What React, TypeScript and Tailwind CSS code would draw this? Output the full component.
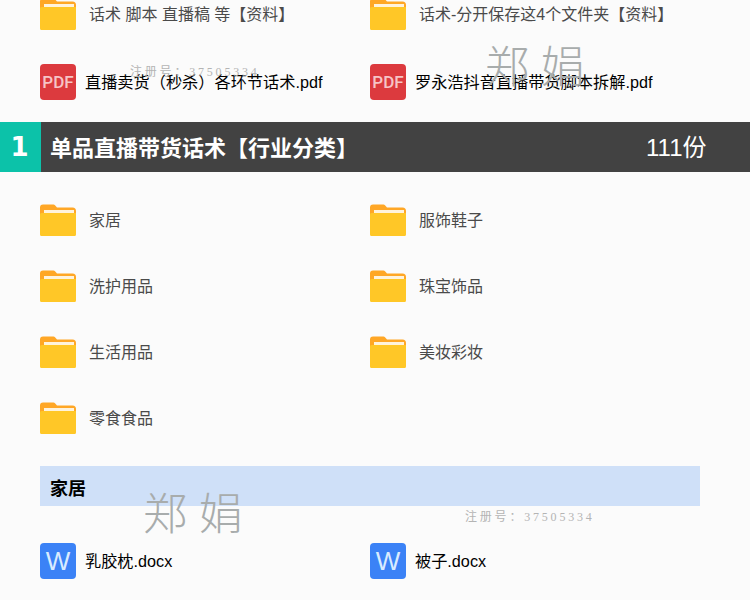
const cjk = "font-['Liberation_Sans','Noto_Sans_CJK_SC',sans-serif]";

function FolderIcon() {
  return (
    <svg width="36" height="36" viewBox="0 0 36 36" className="shrink-0">
      <path d="M3 2.500h10.500a2 2 0 0 1 1.500.7L17 5.500h15.500A3.500 3.500 0 0 1 36 9V13H0V5.500A3 3 0 0 1 3 2.500z" fill="#ffa726" />
      <rect x="4" y="8" width="30" height="3.500" fill="#fff3dc" />
      <path d="M1.500 11H36V32.500A1.500 1.500 0 0 1 34.500 34H1.500A1.500 1.500 0 0 1 0 32.500V12.500A1.500 1.500 0 0 1 1.500 11z" fill="#ffc727" />
    </svg>
  );
}

function FolderRow({ label }: { label: string }) {
  return (
    <div className="flex items-center gap-[13px]">
      <FolderIcon />
      <span className="pt-0.5 text-base text-[#4a4a4a]">{label}</span>
    </div>
  );
}

function FileRow({ label, kind }: { label: string; kind: "pdf" | "word" }) {
  return (
    <div className="flex items-center gap-[9px]">
      {kind === "pdf" ? (
        <div className="flex h-9 w-9 shrink-0 items-center justify-center rounded-[4px] bg-[#dc3a3e] font-['Roboto',sans-serif] text-[17px] font-medium leading-none text-[#f6c4c6]">
          PDF
        </div>
      ) : (
        <div className="flex h-9 w-9 shrink-0 items-center justify-center rounded-[4px] bg-[#3b82f6] text-[26px] leading-none text-[#d9ecff]">
          W
        </div>
      )}
      <span className="whitespace-nowrap text-[16.2px] text-black">{label}</span>
    </div>
  );
}

function TwoCols({ children, className = "" }: { children: React.ReactNode; className?: string }) {
  return <div className={`grid grid-cols-[330px_330px] pl-10 ${className}`}>{children}</div>;
}

function Mark({ className }: { className: string }) {
  return (
    <div className={`pointer-events-none absolute whitespace-nowrap text-[12px] leading-none tracking-[2.800px] text-[#b4b4b4] font-['Liberation_Serif','Noto_Sans_CJK_SC',serif] ${className}`}>
      注册号：37505334
    </div>
  );
}

function Name({ className }: { className: string }) {
  return (
    <div className={`pointer-events-none absolute whitespace-nowrap text-[44px] font-light leading-none tracking-[1px] text-[#a8acac] font-['Noto_Sans_CJK_SC',serif] ${className}`}>
      郑 娟
    </div>
  );
}

export default function App() {
  return (
    <div className={`relative h-[600px] w-[750px] overflow-hidden bg-[#fbfbfb] ${cjk}`}>
      <div className="-mt-1">
        <TwoCols>
          <FolderRow label="话术 脚本 直播稿 等【资料】" />
          <FolderRow label="话术-分开保存这4个文件夹【资料】" />
        </TwoCols>
        <TwoCols className="mt-8">
          <FileRow kind="pdf" label="直播卖货（秒杀）各环节话术.pdf" />
          <FileRow kind="pdf" label="罗永浩抖音直播带货脚本拆解.pdf" />
        </TwoCols>
        <div className="mt-[22px] flex h-[50px] items-center bg-[#424242] text-white">
          <div className="flex h-full w-[41px] items-center justify-center bg-[#0cc2a9] pr-0.5 font-['DejaVu_Sans',sans-serif] text-[26px] font-bold">1</div>
          <div className="ml-[9px] w-[596px] pt-0.5 text-[22px] font-bold">单品直播带货话术【行业分类】</div>
          <div className="pt-0.5 text-[24px]">111份</div>
        </div>
        <TwoCols className="mt-[30px] gap-y-[30px]">
          <FolderRow label="家居" />
          <FolderRow label="服饰鞋子" />
          <FolderRow label="洗护用品" />
          <FolderRow label="珠宝饰品" />
          <FolderRow label="生活用品" />
          <FolderRow label="美妆彩妆" />
          <FolderRow label="零食食品" />
        </TwoCols>
        <div className="ml-10 mt-[30px] flex h-10 w-[660px] items-center bg-[#cfe0f8] pl-[10px] pt-1.5 text-[18px] font-bold text-black">家居</div>
        <TwoCols className="mt-[37px]">
          <FileRow kind="word" label="乳胶枕.docx" />
          <FileRow kind="word" label="被子.docx" />
        </TwoCols>
      </div>
      <Mark className="left-[130px] top-[66px]" />
      <Name className="left-[485px] top-[42px]" />
      <Name className="left-[143px] top-[489px]" />
      <Mark className="left-[465px] top-[511px]" />
    </div>
  );
}
